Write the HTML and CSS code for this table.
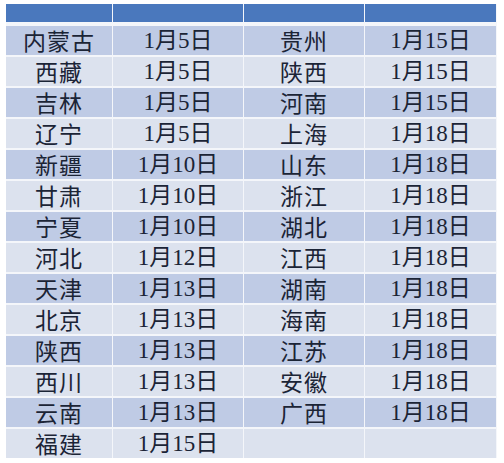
FILE: index.html
```html
<!DOCTYPE html>
<html lang="zh">
<head>
<meta charset="utf-8">
<link rel="stylesheet" href="styles.css">
</head>
<body>
<div class="sheet">
  <div class="grid">
    <div class="hd"></div><div class="hd"></div><div class="hd"></div><div class="hd"></div>

    <div class="c a n">内蒙古</div><div class="c a d">1月5日</div><div class="c a n">贵州</div><div class="c a d">1月15日</div>
    <div class="c b n">西藏</div><div class="c b d">1月5日</div><div class="c b n">陕西</div><div class="c b d">1月15日</div>
    <div class="c a n">吉林</div><div class="c a d">1月5日</div><div class="c a n">河南</div><div class="c a d">1月15日</div>
    <div class="c b n">辽宁</div><div class="c b d">1月5日</div><div class="c b n">上海</div><div class="c b d">1月18日</div>
    <div class="c a n">新疆</div><div class="c a d">1月10日</div><div class="c a n">山东</div><div class="c a d">1月18日</div>
    <div class="c b n">甘肃</div><div class="c b d">1月10日</div><div class="c b n">浙江</div><div class="c b d">1月18日</div>
    <div class="c a n">宁夏</div><div class="c a d">1月10日</div><div class="c a n">湖北</div><div class="c a d">1月18日</div>
    <div class="c b n">河北</div><div class="c b d">1月12日</div><div class="c b n">江西</div><div class="c b d">1月18日</div>
    <div class="c a n">天津</div><div class="c a d">1月13日</div><div class="c a n">湖南</div><div class="c a d">1月18日</div>
    <div class="c b n">北京</div><div class="c b d">1月13日</div><div class="c b n">海南</div><div class="c b d">1月18日</div>
    <div class="c a n">陕西</div><div class="c a d">1月13日</div><div class="c a n">江苏</div><div class="c a d">1月18日</div>
    <div class="c b n">西川</div><div class="c b d">1月13日</div><div class="c b n">安徽</div><div class="c b d">1月18日</div>
    <div class="c a n">云南</div><div class="c a d">1月13日</div><div class="c a n">广西</div><div class="c a d">1月18日</div>
    <div class="c b n">福建</div><div class="c b d">1月15日</div><div class="c b n"></div><div class="c b d"></div>
  </div>
</div>
</body>
</html>
```
FILE: styles.css
```css
html, body {
  margin: 0;
  padding: 0;
  background: #ffffff;
}
.sheet {
  padding: 4px 0 0 6px;
}
.grid {
  width: 491px;
  display: grid;
  grid-template-columns: 106px 130px 120px 131px;
  grid-template-rows: 20px repeat(14, 29px);
  column-gap: 1px;
  row-gap: 2px;
  background: #f4f6fa;
}
.hd {
  background: #4a78bd;
  margin-bottom: 2px;
}
.c {
  display: flex;
  align-items: center;
  justify-content: center;
  color: #1b2436;
  font-size: 23px;
  line-height: 1;
  white-space: nowrap;
}
.a { background: #bfcbe5; }
.b { background: #dce2ee; }
.n {
  font-family: "Noto Sans CJK SC", sans-serif;
  letter-spacing: 1px;
}
.d {
  font-family: "Liberation Serif", "Noto Sans CJK SC", serif;
}
```
